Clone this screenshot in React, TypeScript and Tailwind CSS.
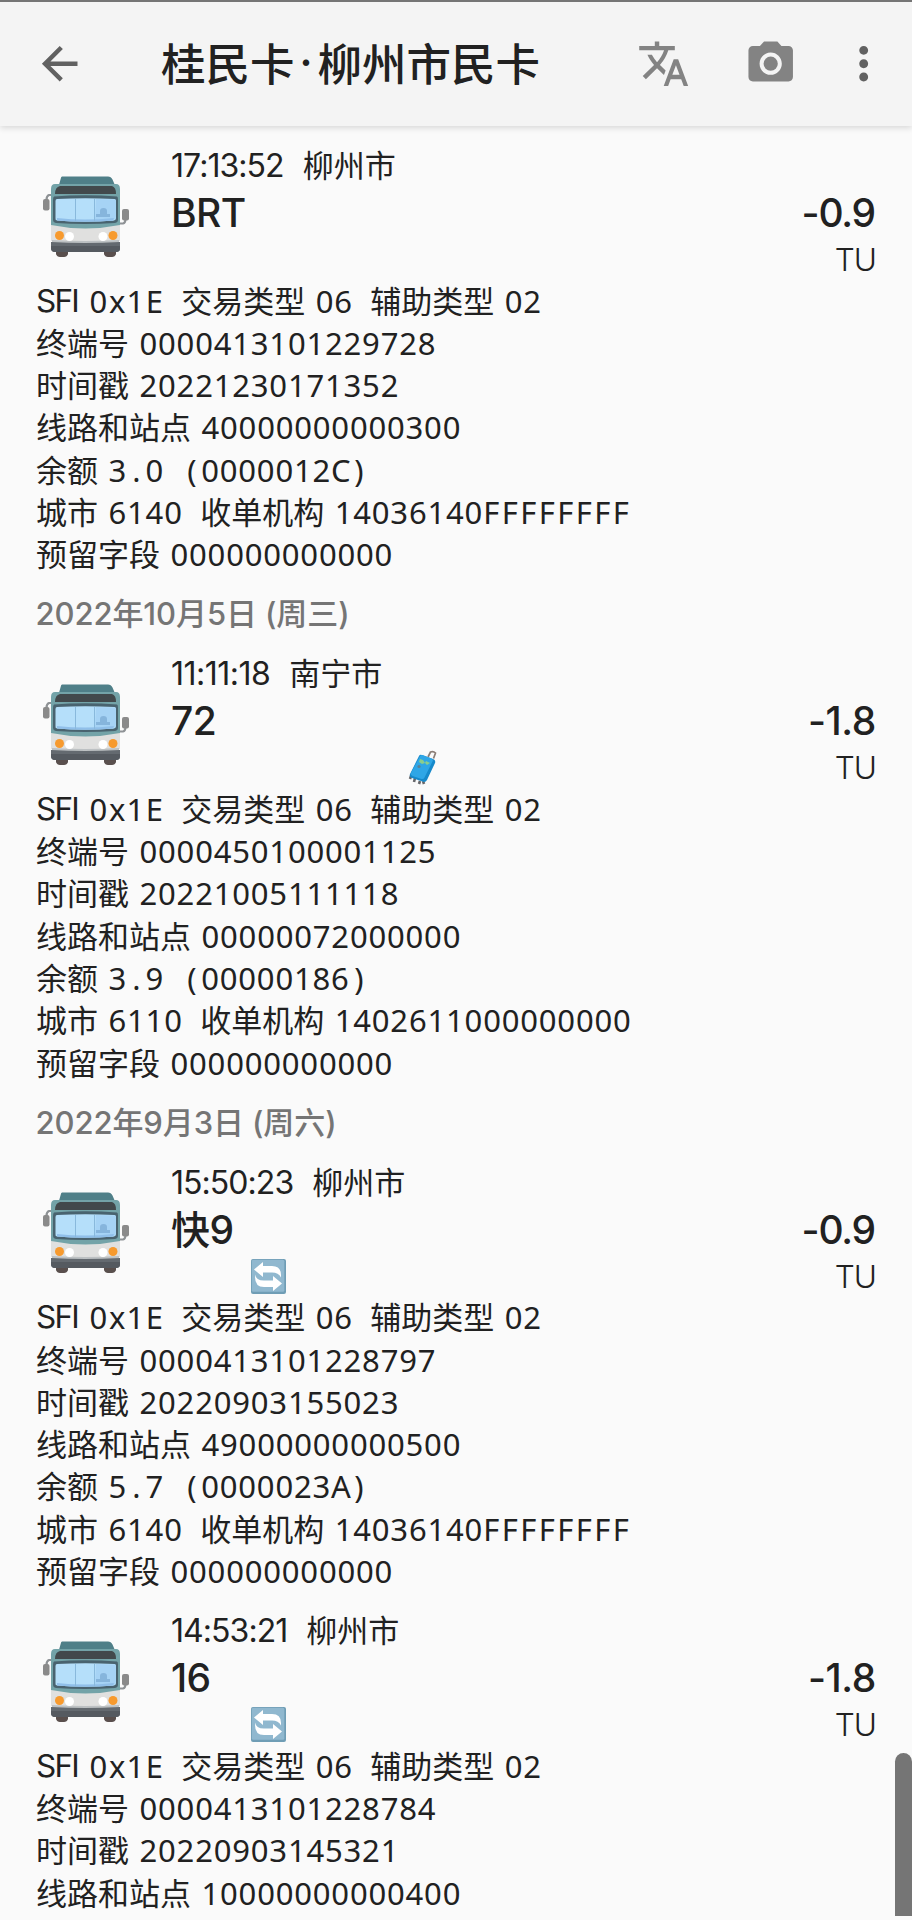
import { MdArrowBack, MdCameraAlt, MdMoreVert, MdTranslate } from "react-icons/md";

type Mark = "luggage" | "transfer";

interface Trip {
  date?: string;
  time: string;
  city: string;
  line: string;
  amount: string;
  mark?: Mark;
  terminal: string;
  timestamp: string;
  station: string;
  balance?: string;
  cityCode?: string;
  acquirer?: string;
  reserved?: string;
}

const trips: Trip[] = [
  {
    time: "17:13:52",
    city: "柳州市",
    line: "BRT",
    amount: "-0.9",
    terminal: "0000413101229728",
    timestamp: "20221230171352",
    station: "40000000000300",
    balance: "3.0 (0000012C)",
    cityCode: "6140",
    acquirer: "14036140FFFFFFFF",
    reserved: "000000000000",
  },
  {
    date: "2022年10月5日 (周三)",
    time: "11:11:18",
    city: "南宁市",
    line: "72",
    amount: "-1.8",
    mark: "luggage",
    terminal: "0000450100001125",
    timestamp: "20221005111118",
    station: "00000072000000",
    balance: "3.9 (00000186)",
    cityCode: "6110",
    acquirer: "1402611000000000",
    reserved: "000000000000",
  },
  {
    date: "2022年9月3日 (周六)",
    time: "15:50:23",
    city: "柳州市",
    line: "快9",
    amount: "-0.9",
    mark: "transfer",
    terminal: "0000413101228797",
    timestamp: "20220903155023",
    station: "49000000000500",
    balance: "5.7 (0000023A)",
    cityCode: "6140",
    acquirer: "14036140FFFFFFFF",
    reserved: "000000000000",
  },
  {
    time: "14:53:21",
    city: "柳州市",
    line: "16",
    amount: "-1.8",
    mark: "transfer",
    terminal: "0000413101228784",
    timestamp: "20220903145321",
    station: "10000000000400",
  },
];

function BusIcon() {
  return (
    <svg viewBox="0 0 110 110" className="w-[110px] h-[110px] shrink-0">
      <path d="M22 35h-3q-2.500 1-2.500 5" fill="none" stroke="#8e9295" strokeWidth="2.200" />
      <rect x="13" y="39" width="6.500" height="11.500" rx="2" fill="#8a8a8a" />
      <path d="M90 63.500h3q2.500-.5 2.500-5" fill="none" stroke="#8e9295" strokeWidth="2.200" />
      <rect x="92" y="49" width="7" height="11.500" rx="2" fill="#8a8a8a" />
      <path d="M26 90h12v4q-1 3-4 3h-4q-3 0-4-3zM74 90h12v4q-1 3-4 3h-4q-3 0-4-3z" fill="#594f4d" />
      <path d="M32 16.500h46q3 0 4.500 3l3 7H28.500l2-7q.5-3 1.500-3z" fill="#4f7f88" />
      <path d="M25 24h61q4 0 4 5v42H21V29q0-5 4-5z" fill="#73a3a8" />
      <path d="M30 26h52q4 1 4 8H25q0-7 5-8z" fill="#42494c" />
      <path d="M24 36.500Q55 34 87 36.500q1 .5 1 3v20q0 3-3 3.500Q55 65 26 63q-3-.5-3-3.500V40q0-3 1-3.500z" fill="#49636f" />
      <path d="M27 39Q55 37.500 84.500 39q1.500 0 1.500 2v17q0 2-2 2.500Q55 63 27 60.500q-2-.5-1.500-2.500V41q0-2 1.500-2z" fill="#b5dffa" />
      <path d="M66 39q10 0 18.500.5 1.500 0 1.500 2v14q0 4-3 5H65z" fill="#a6d3f5" />
      <path d="M66 55v-1h4v-3q0-3 3.500-3t3.500 3v3h3v3H66z" fill="#86b5dc" />
      <path d="M27 58q28 3 57 0l-1 2.500Q55 63 27 60.500z" fill="#90bfe9" />
      <path d="M45.500 39v22M64.500 39v22" stroke="#89b9dc" strokeWidth="1" />
      <path d="M21 65q34 7 69 0v16H21z" fill="#e0e0df" />
      <path d="M22 80q33 2 67 0v4H22z" fill="#bdc1c3" />
      <circle cx="29.500" cy="75.500" r="4.500" fill="#f79a2e" />
      <circle cx="39.500" cy="76.500" r="4.500" fill="#fff" />
      <circle cx="73" cy="76.500" r="4.500" fill="#fff" />
      <circle cx="83" cy="75.500" r="4.500" fill="#f79a2e" />
      <path d="M21 82q34 2 69 0v7q0 3-4 3H25q-4 0-4-4z" fill="#646a70" />
      <path d="M21 86h69v2q0 4-4 4H25q-4 0-4-4z" fill="#555a60" />
    </svg>
  );
}

function LuggageIcon() {
  return (
    <svg viewBox="0 0 30 36" className="w-[30px] h-[36px]">
      <path d="m20 7 2.500-5q3-1 5 1l-2 5.500" fill="none" stroke="#8b7d76" strokeWidth="1.700" />
      <path d="m3 26-1 3M7 28l-1 4M12 31l-1 3M15 31l1 3" stroke="#65666a" strokeWidth="2.600" />
      <path d="M11 6q1-2 3-1l11 4q3 1 2 4l-8 17q-1 2-3 2L4 28q-3-1-2-4z" fill="#1789ca" />
      <path d="M12 6q1-1.500 2.500-1l9 3.500q2 1 1 3l-8 16q-1 2-3 1.500L4.500 26Q2 25 3 23z" fill="#2fa6e6" />
      <path d="m12 9 3 1 2 3-3 1-3-2zM18 11l4 2-3 2-2-2z" fill="#8acd8d" />
      <circle cx="11" cy="16.500" r="1.600" fill="#5b8294" />
    </svg>
  );
}

function TransferIcon() {
  return (
    <svg viewBox="0 0 35 35" className="w-[35px] h-[35px]">
      <rect width="35" height="35" rx="2" fill="#6f9db5" />
      <rect x=".8" y=".8" width="32.500" height="32" rx="1.500" fill="#90b8cf" />
      <path d="M3 10.500 12 3v4h9q9 0 9 9v2.500q-2.500-5-9-5h-9V18z" fill="#fff" />
      <path d="M31 24.500 22 17v4.500h-9q-8 0-9-6V18q0 10 9 10h9v4z" fill="#fff" />
    </svg>
  );
}

// Every latin character takes one 18.5px cell
function Mono({ text }: { text: string }) {
  const runs = text.match(/\d+|F+|./g) ?? [];
  return (
    <span>
      {runs.map((run, i) => {
        if (/^\d/.test(run)) return <span key={i} className="tracking-[0.82px]">{run}</span>;
        if (run[0] === "F") return <span key={i} className="tracking-[2.44px]">{run}</span>;
        return <span key={i} className="inline-block w-[18.53px] text-center whitespace-pre">{run}</span>;
      })}
    </span>
  );
}

function Field({ label, value }: { label: string; value: string }) {
  const latin = label === "SFI";
  return (
    <span className="flex gap-[10.500px]">
      <span className={latin ? "w-[43px] text-[31.500px] tracking-[-1.8px] font-['Inter',sans-serif]" : ""}>{label}</span>
      <Mono text={value} />
    </span>
  );
}

function Row({ children }: { children: React.ReactNode }) {
  return <div className="flex h-[42.3px] gap-[17.500px] leading-[42.3px]">{children}</div>;
}

function TripItem({ trip }: { trip: Trip }) {
  // times full of ones are set looser
  const narrow = trip.time.split("1").length > 4;
  return (
    <section>
      {trip.date && (
        <h2 className="h-[60px] pl-[35.500px] leading-[60px] text-[31px] font-medium tracking-[-0.1px] text-[#757575] font-['Inter','Noto_Sans_CJK_SC',sans-serif]">
          {trip.date}
        </h2>
      )}
      <div className="flex h-[143.500px] pl-[30px] pr-[36px] pt-[7px] font-['Inter','Noto_Sans_CJK_SC',sans-serif]">
        <div className="mr-[31px] pt-[16.500px]">
          <BusIcon />
        </div>
        <div className="flex-1">
          <div className="flex h-[46px] items-center gap-[19px]">
            <span className={`text-[32px] ${narrow ? "tracking-[-0.5px]" : "tracking-[-0.95px]"}`}>{trip.time}</span>
            <span className="text-[31px]">{trip.city}</span>
          </div>
          <div className="h-[46px] leading-[47.500px] text-[39px] font-medium tracking-[-0.6px]">{trip.line}</div>
          {trip.mark === "luggage" && <div className="pl-[237px] pt-[7px]"><LuggageIcon /></div>}
          {trip.mark === "transfer" && <div className="pl-[80px] pt-[7px]"><TransferIcon /></div>}
        </div>
        <div className="pt-[46px] text-right">
          <div className={`h-[46px] leading-[47.500px] text-[39px] font-medium ${trip.amount.includes("1") ? "tracking-[-0.4px]" : "tracking-[-1.2px] pr-px"}`}>
            {trip.amount}
          </div>
          <div className="h-[46px] pt-px leading-[47px] text-[31.500px] font-light tracking-[-1px]">TU</div>
        </div>
      </div>
      <div className="pl-[36px] pb-[8.800px] text-[31px] font-['Noto_Sans','Noto_Sans_CJK_SC',sans-serif] whitespace-nowrap">
        <Row>
          <Field label="SFI" value="0x1E" />
          <Field label="交易类型" value="06" />
          <Field label="辅助类型" value="02" />
        </Row>
        <Row><Field label="终端号" value={trip.terminal} /></Row>
        <Row><Field label="时间戳" value={trip.timestamp} /></Row>
        <Row><Field label="线路和站点" value={trip.station} /></Row>
        {trip.balance && <Row><Field label="余额" value={trip.balance} /></Row>}
        {trip.cityCode && trip.acquirer && (
          <Row>
            <Field label="城市" value={trip.cityCode} />
            <Field label="收单机构" value={trip.acquirer} />
          </Row>
        )}
        {trip.reserved && <Row><Field label="预留字段" value={trip.reserved} /></Row>}
      </div>
    </section>
  );
}

export default function App() {
  return (
    <div lang="zh-CN" className="relative h-[1920px] w-[912px] overflow-hidden bg-[#fafafa] text-[#212121]">
      {/* Toolbar */}
      <header className="relative z-10 flex h-[126px] items-center border-t-2 border-[#757575] bg-[#f4f4f4] pl-[33px] shadow-[0_2px_6px_rgba(0,0,0,0.14)]">
        <MdArrowBack className="size-[53.4px] shrink-0 text-[#616161]" />
        <h1 className="ml-[74.600px] flex flex-1 items-center pb-[4px] text-[44.500px] font-medium font-['Noto_Sans_CJK_SC',sans-serif] whitespace-nowrap">
          <span>桂民卡</span>
          <span className="w-[23px] text-center font-['Inter',sans-serif]">·</span>
          <span>柳州市民卡</span>
        </h1>
        <MdTranslate className="size-[53.4px] shrink-0 text-[#838383]" />
        <MdCameraAlt className="ml-[53px] size-[53.4px] shrink-0 text-[#838383]" />
        <MdMoreVert className="ml-[40px] mr-[21.6px] size-[53.4px] shrink-0 text-[#616161]" />
      </header>

      <main className="pt-[10px]">
        {trips.map((trip) => (
          <TripItem key={trip.timestamp} trip={trip} />
        ))}
      </main>

      {/* Scroll thumb */}
      <div className="absolute right-0 top-[1753px] h-[163px] w-[17px] rounded-t-full bg-[#757575]" />
    </div>
  );
}
